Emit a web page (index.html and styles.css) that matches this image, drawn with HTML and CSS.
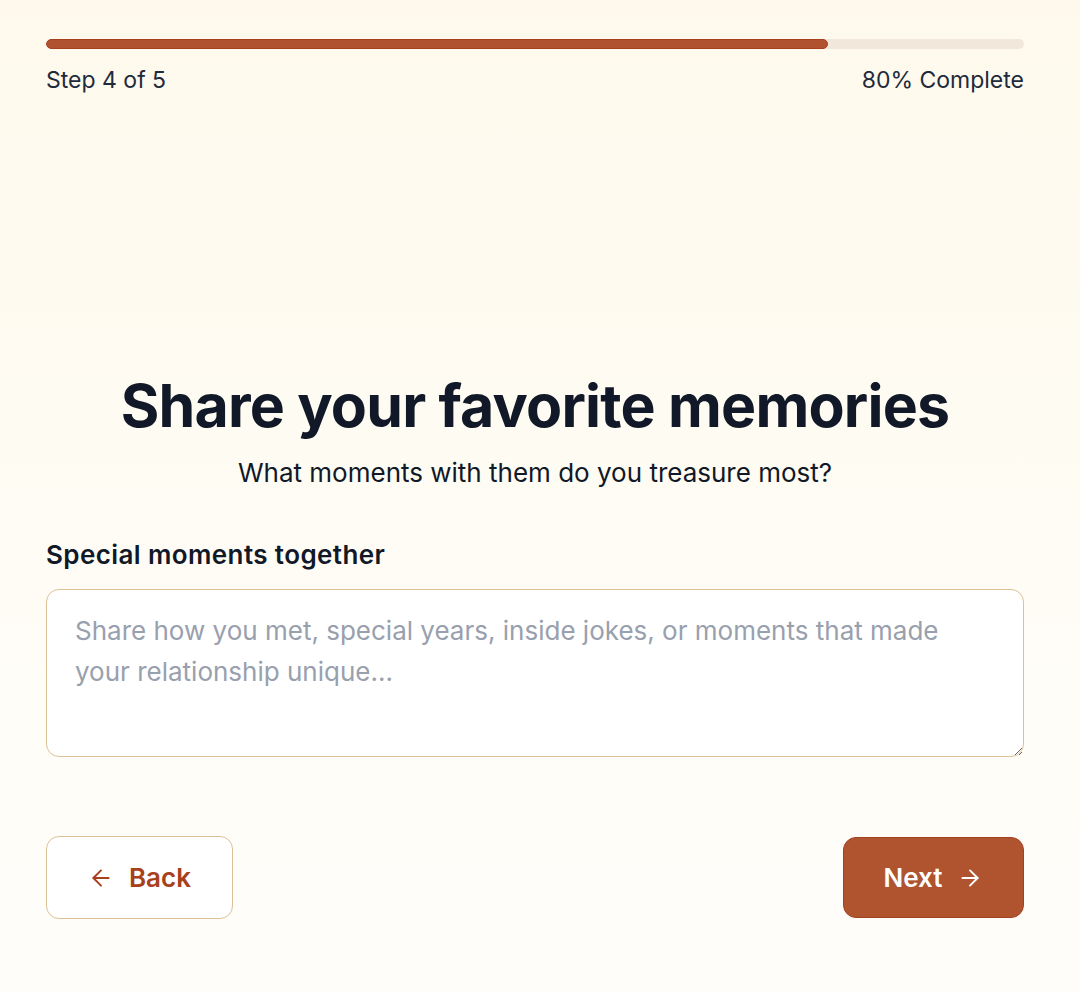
FILE: index.html
```html
<!DOCTYPE html>
<html lang="en">
<head>
<meta charset="utf-8">
<title>Share your favorite memories</title>
<link rel="stylesheet" href="styles.css">
</head>
<body>
<main class="page">
  <section class="progress">
    <div class="track"><div class="fill" style="width:80%"></div></div>
    <div class="progress-meta">
      <span>Step 4 of 5</span>
      <span>80% Complete</span>
    </div>
  </section>

  <section class="content">
    <h1 class="title">Share your favorite memories</h1>
    <p class="subtitle">What moments with them do you treasure most?</p>

    <label class="label" for="moments">Special moments together</label>
    <textarea id="moments" class="textarea" placeholder="Share how you met, special years, inside jokes, or moments that made your relationship unique..."></textarea>

    <div class="actions">
      <button class="btn btn-back" type="button">
        <svg class="icon" viewBox="0 0 24 24" fill="none" stroke="currentColor" stroke-width="1.8" stroke-linecap="round" stroke-linejoin="round"><path d="M19 12H5"/><path d="M12 19l-7-7 7-7"/></svg>
        <span>Back</span>
      </button>
      <button class="btn btn-next" type="button">
        <span>Next</span>
        <svg class="icon" viewBox="0 0 24 24" fill="none" stroke="currentColor" stroke-width="1.8" stroke-linecap="round" stroke-linejoin="round"><path d="M5 12h14"/><path d="M12 5l7 7-7 7"/></svg>
      </button>
    </div>
  </section>
</main>
</body>
</html>
```
FILE: styles.css
```css
* { box-sizing: border-box; }
html, body { margin: 0; padding: 0; }
body {
  font-family: Inter, "Noto Sans", sans-serif;
  background: linear-gradient(180deg, #fef9ec 0%, #fefcf5 60%, #fffdfa 100%);
  min-height: 992px;
  color: #111827;
}
.page {
  width: 978px;
  margin-left: 46px;
  padding-top: 39px;
}
.track {
  height: 10px;
  background: #f1e8db;
  border-radius: 5px;
  overflow: hidden;
}
.fill {
  height: 100%;
  background: #b0522f;
  border: 1px solid #a6401e;
  border-radius: 5px;
}
.progress-meta {
  display: flex;
  justify-content: space-between;
  margin-top: 17px;
  font-size: 23px;
  line-height: 28px;
  color: #1f2a3c;
}
.content {
  display: flex;
  flex-direction: column;
  padding-top: 277px;
}
.title {
  margin: 0;
  text-align: center;
  font-size: 59px;
  line-height: 70px;
  font-weight: 700;
  letter-spacing: -0.8px;
  color: #111827;
}
.subtitle {
  margin: 16px 0 0;
  text-align: center;
  font-size: 26px;
  line-height: 32px;
  color: #111827;
}
.label {
  margin-top: 50px;
  font-size: 26px;
  line-height: 32px;
  font-weight: 600;
  letter-spacing: 0.4px;
  color: #111827;
}
.textarea {
  margin-top: 18px;
  height: 168px;
  width: 100%;
  padding: 20px 44px 20px 28px;
  border: 1.5px solid #dcc196;
  border-radius: 13px;
  background: #fff;
  font-family: inherit;
  font-size: 26px;
  line-height: 41px;
  color: #111827;
  resize: vertical;
}
.textarea::placeholder { color: #98a0ad; }
.actions {
  display: flex;
  justify-content: space-between;
  align-items: center;
  margin-top: 79px;
}
.btn {
  display: flex;
  align-items: center;
  justify-content: center;
  gap: 15px;
  font-family: inherit;
  font-size: 26px;
  font-weight: 600;
  border-radius: 13px;
  cursor: pointer;
}
.icon {
  width: 26px;
  height: 26px;
  flex: none;
}
.btn-back {
  width: 187px;
  height: 83px;
  background: #fff;
  border: 1.5px solid #dcc196;
  color: #a8401c;
}
.btn-next {
  width: 181px;
  height: 81px;
  background: #b0532f;
  border: 1px solid #a3401f;
  color: #fff;
}
```
